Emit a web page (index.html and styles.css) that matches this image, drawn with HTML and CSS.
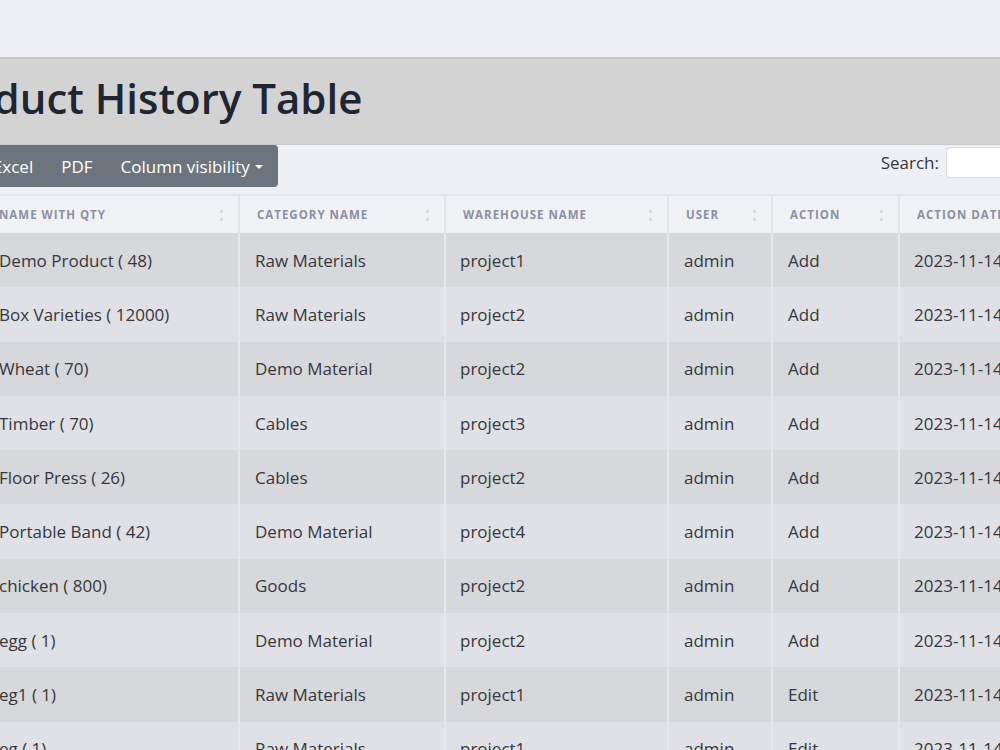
FILE: index.html
```html
<!DOCTYPE html>
<html>
<head>
<meta charset="utf-8">
<link rel="stylesheet" href="styles.css">
</head>
<body>
<div class="page">
  <div class="topbar"></div>
  <div class="title-band">
    <h1 class="title">Product History Table</h1>
  </div>
  <div class="toolbar">
    <div class="btn-group">
      <button class="btn">Copy</button>
      <button class="btn">Excel</button>
      <button class="btn">PDF</button>
      <button class="btn">Column visibility <span class="caret"></span></button>
    </div>
    <label class="search">Search: <input class="search-input" type="text"></label>
  </div>
  <table class="table">
    <colgroup>
      <col class="c1"><col class="c2"><col class="c3"><col class="c4"><col class="c5"><col class="c6">
    </colgroup>
    <thead>
      <tr>
        <th><span>Name with qty</span><i class="sort"></i></th>
        <th><span>Category name</span><i class="sort"></i></th>
        <th><span>Warehouse name</span><i class="sort"></i></th>
        <th><span>User</span><i class="sort"></i></th>
        <th><span>Action</span><i class="sort"></i></th>
        <th><span>Action date</span><i class="sort"></i></th>
      </tr>
    </thead>
    <tbody>
      <tr><td>Demo Product ( 48)</td><td>Raw Materials</td><td>project1</td><td>admin</td><td>Add</td><td>2023-11-14</td></tr>
      <tr><td>Box Varieties ( 12000)</td><td>Raw Materials</td><td>project2</td><td>admin</td><td>Add</td><td>2023-11-14</td></tr>
      <tr><td>Wheat ( 70)</td><td>Demo Material</td><td>project2</td><td>admin</td><td>Add</td><td>2023-11-14</td></tr>
      <tr><td>Timber ( 70)</td><td>Cables</td><td>project3</td><td>admin</td><td>Add</td><td>2023-11-14</td></tr>
      <tr><td>Floor Press ( 26)</td><td>Cables</td><td>project2</td><td>admin</td><td>Add</td><td>2023-11-14</td></tr>
      <tr><td>Portable Band ( 42)</td><td>Demo Material</td><td>project4</td><td>admin</td><td>Add</td><td>2023-11-14</td></tr>
      <tr><td>chicken ( 800)</td><td>Goods</td><td>project2</td><td>admin</td><td>Add</td><td>2023-11-14</td></tr>
      <tr><td>egg ( 1)</td><td>Demo Material</td><td>project2</td><td>admin</td><td>Add</td><td>2023-11-14</td></tr>
      <tr><td>eg1 ( 1)</td><td>Raw Materials</td><td>project1</td><td>admin</td><td>Edit</td><td>2023-11-14</td></tr>
      <tr><td>eg ( 1)</td><td>Raw Materials</td><td>project1</td><td>admin</td><td>Edit</td><td>2023-11-14</td></tr>
    </tbody>
  </table>
</div>
</body>
</html>
```
FILE: styles.css
```css
html, body {
  margin: 0;
  padding: 0;
  background: #eff0f5;
  overflow: hidden;
  height: 750px;
}
body {
  font-family: "Open Sans", "Noto Sans", sans-serif;
  color: #36373c;
}
.page {
  margin-left: -16px;
  width: 1200px;
}
.topbar {
  height: 57px;
}
.title-band {
  background: #d3d3d3;
  border-top: 2px solid #c6c6c6;
  border-bottom: 1px solid #c9c9cc;
  height: 85px;
  display: flex;
  align-items: center;
  overflow: hidden;
}
.title {
  margin: 0 0 0 -60px;
  font-size: 42px;
  font-weight: 600;
  color: #1f2632;
  line-height: 1;
  padding-bottom: 8px;
}
.toolbar {
  display: flex;
  justify-content: space-between;
  align-items: flex-start;
  height: 49px;
  border-bottom: 1px solid #e3e4e9;
}
.btn-group {
  display: flex;
  background: #6c757d;
  border-radius: 0 4px 4px 0;
  margin-left: -73px;
  height: 42px;
}
.btn {
  background: transparent;
  border: 0;
  color: #ffffff;
  font-family: "Open Sans", "Noto Sans", sans-serif;
  font-size: 17px;
  padding: 0 14px;
  height: 42px;
  display: flex;
  align-items: center;
  gap: 4px;
}
.btn:last-child {
  padding-right: 15px;
}
.caret {
  display: inline-block;
  width: 0;
  height: 0;
  border-left: 4px solid transparent;
  border-right: 4px solid transparent;
  border-top: 4px solid #ffffff;
  margin-left: 1px;
  margin-top: 2px;
}
.search {
  display: flex;
  align-items: center;
  gap: 7px;
  font-size: 17px;
  color: #36373c;
  margin-right: 36px;
  margin-top: 2px;
}
.search-input {
  width: 200px;
  height: 29px;
  border: 1px solid #dcdde2;
  border-radius: 4px;
  background: #ffffff;
  padding: 0;
}
.table {
  border-collapse: collapse;
  table-layout: fixed;
  width: 1080px;
}
.c1 { width: 255px; }
.c2 { width: 206px; }
.c3 { width: 223px; }
.c4 { width: 104px; }
.c5 { width: 127px; }
.c6 { width: 165px; }
th {
  background: #f1f2f5;
  color: #8a90a3;
  font-size: 11.5px;
  font-weight: 700;
  text-transform: uppercase;
  letter-spacing: 1px;
  text-align: left;
  height: 37px;
  padding: 0 15px 0 17px;
  position: relative;
  border-left: 2px solid #e4e5ea;
  border-top: 1px solid #e4e5ea;
  white-space: nowrap;
}
th:first-child {
  padding-left: 15px;
}
th:first-child, td:first-child {
  border-left: 0;
}
.sort {
  position: absolute;
  right: 14px;
  top: 13px;
  width: 4px;
  height: 12px;
}
.sort::before, .sort::after {
  content: "";
  position: absolute;
  left: 0;
  width: 3px;
  height: 3px;
  border-radius: 1px;
  background: #d6d8df;
}
.sort::before { top: 1px; }
.sort::after { bottom: 0; }
td {
  font-size: 17px;
  height: 54.3px;
  padding: 0 15px;
  border-left: 2px solid #e6e7ec;
  white-space: nowrap;
  color: #36373c;
}
tbody tr:nth-child(odd) td {
  background: #d7d8dc;
}
tbody tr:nth-child(even) td {
  background: #e0e1e6;
}
td:nth-child(3), td:nth-child(6) {
  padding-left: 14px;
}
```
